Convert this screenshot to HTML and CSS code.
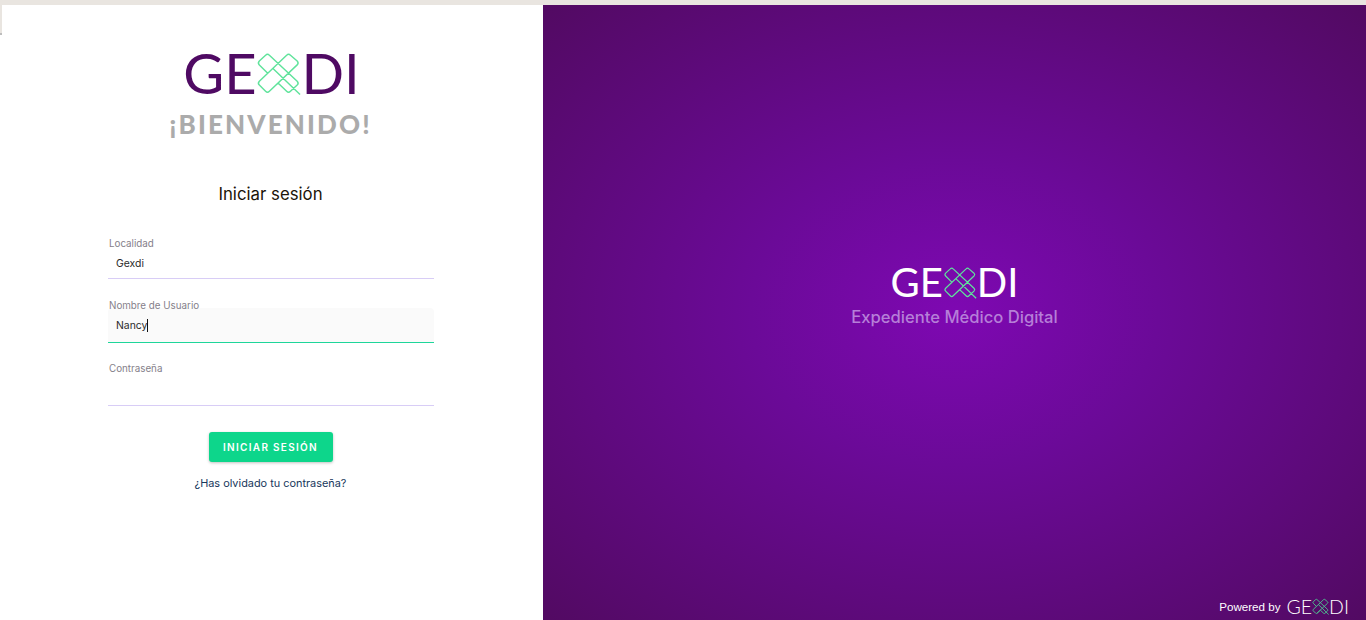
FILE: index.html
```html
<!DOCTYPE html>
<html lang="en">
<head>
  <meta charset="UTF-8" />
  <meta name="viewport" content="width=device-width, initial-scale=1.0"/>
  <title>Gexdi</title>
  <link rel="stylesheet" href="styles.css">
</head>
<body>
  <svg class="sprites" width="0" height="0">
    <symbol id="mark" viewBox="2 4 47 46">
      <path d="M12 8 Q14 6 16 8 L45 35 Q47 37 45 39 L38 45.5 Q36 47.5 34 45.5 L25 37 L16 45.5 Q14 47.5 12 45.5 L5.5 39 Q3.5 37 5.5 35 L34 8 Q36 6 38 8 L45 14 Q47 16 45 18 L16 45.5 M12 8 L5.5 14 Q3.5 16 5.5 18 L14 26.5 M20 22 L48 49" />
    </symbol>
  </svg>

  <div class="top-bar"></div>
  <div class="edge-strip"></div>

  <div class="page">
    <!-- Login -->
    <main class="login-panel">
      <div class="logo logo-large">
        <span>GE</span>
        <svg class="logo-mark"><use href="#mark"></use></svg>
        <span>DI</span>
      </div>
      <div class="welcome">¡BIENVENIDO!</div>
      <h1 class="login-title">Iniciar sesión</h1>

      <form class="login-form">
        <div class="field field-short">
          <div class="field-label">Localidad</div>
          <div class="field-input short">Gexdi</div>
        </div>
        <div class="field">
          <div class="field-label">Nombre de Usuario</div>
          <div class="field-input focused">Nancy<span class="caret"></span></div>
        </div>
        <div class="field">
          <div class="field-label">Contraseña</div>
          <div class="field-input"></div>
        </div>
        <button type="button" class="button">INICIAR SESIÓN</button>
        <a class="forgot" href="#">¿Has olvidado tu contraseña?</a>
      </form>
    </main>

    <!-- Brand side -->
    <section class="brand-panel">
      <div class="brand-center">
        <div class="logo logo-medium">
          <span>GE</span>
          <svg class="logo-mark"><use href="#mark"></use></svg>
          <span>DI</span>
        </div>
        <div class="tagline">Expediente Médico Digital</div>
      </div>
      <div class="powered">
        <span class="powered-text">Powered by</span>
        <div class="logo logo-small">
          <span>GE</span>
          <svg class="logo-mark"><use href="#mark"></use></svg>
          <span>DI</span>
        </div>
      </div>
    </section>
  </div>
</body>
</html>
```

FILE: styles.css
```css
* {
  box-sizing: border-box;
}

body {
  margin: 0;
  height: 620px;
  overflow: hidden;
  background-color: #ffffff;
  font-family: Inter, "Liberation Sans", sans-serif;
  display: flex;
  flex-direction: column;
}

.sprites {
  position: absolute;
}

.top-bar {
  height: 5px;
  background-color: #e9e5e0;
}

.edge-strip {
  position: absolute;
  top: 5px;
  left: 0;
  width: 2px;
  height: 30px;
  background-color: #e9e5e0;
  border-bottom: 2px solid #bdbdbd;
}

.page {
  flex: 1;
  display: flex;
}

.login-panel {
  width: 543px;
  display: flex;
  flex-direction: column;
  align-items: center;
  padding: 40px 2px 0 0;
}

.logo {
  display: flex;
  align-items: center;
  font-family: Lato, sans-serif;
  line-height: 1;
}

.logo-mark {
  fill: none;
  stroke: #5fe39b;
  stroke-width: 1.5;
  stroke-linejoin: round;
}

.logo-large {
  font-size: 56px;
  color: #4f0a63;
  margin-left: 2px;
}

.logo-large .logo-mark {
  width: 45px;
  height: 45px;
}

.logo-medium {
  font-size: 40px;
  color: #ffffff;
  justify-content: center;
}

.logo-medium .logo-mark {
  width: 34px;
  height: 33px;
  stroke-width: 1.7;
}

.logo-small {
  font-size: 19.5px;
  font-weight: 300;
  color: #ffffff;
}

.logo-small .logo-mark {
  width: 17px;
  height: 17px;
  stroke: #4fbf8f;
  stroke-width: 2.6;
}

.welcome {
  font-family: Lato, sans-serif;
  font-weight: 900;
  font-size: 26px;
  line-height: 32px;
  letter-spacing: 2.15px;
  color: #ababab;
  margin-top: 7px;
}

.login-title {
  margin: 42px 0 0;
  font-size: 16.8px;
  line-height: 24px;
  font-weight: 400;
  color: #1c1408;
}

.login-form {
  width: 326px;
  margin-top: 32px;
  display: flex;
  flex-direction: column;
  align-items: center;
}

.field {
  width: 100%;
  height: 63px;
}

.field-short {
  height: 62px;
}

.field-label {
  font-size: 9.8px;
  line-height: 12px;
  margin-bottom: -4px;
  padding-left: 1.5px;
  color: #85808a;
}

.field-input {
  height: 35px;
  padding: 0 8.5px;
  display: flex;
  align-items: center;
  font-size: 10.4px;
  color: #2a2a2a;
  border-bottom: 1px solid #d8cdf6;
}

.field-input.short {
  height: 33px;
  padding-top: 2px;
}

.field-input.focused {
  background-color: #fafafa;
  border-bottom-color: #1ed69a;
  border-radius: 4px 4px 0 0;
}

.caret {
  width: 1px;
  height: 13px;
  background-color: #111111;
}

.button {
  width: 124px;
  height: 30px;
  margin-top: 6px;
  border: none;
  border-radius: 3px;
  background-color: #0dd68b;
  color: #ffffff;
  font-family: Inter, sans-serif;
  font-size: 10px;
  font-weight: 600;
  letter-spacing: 1.3px;
  box-shadow: 0 1px 3px rgba(0, 0, 0, 0.25);
}

.forgot {
  margin-top: 14px;
  font-size: 10.9px;
  line-height: 14px;
  color: #17375c;
  text-decoration: none;
}

.brand-panel {
  flex: 1;
  display: flex;
  flex-direction: column;
  background: radial-gradient(ellipse at center, #7e08b2 0%, #6b0a98 35%, #520a62 100%);
}

.brand-center {
  flex: 1;
  display: flex;
  flex-direction: column;
  align-items: center;
  justify-content: center;
  padding-bottom: 12px;
}

.tagline {
  margin-top: 5px;
  font-size: 16.6px;
  line-height: 20px;
  font-weight: 500;
  color: #b67fd8;
}

.powered {
  display: flex;
  align-items: center;
  justify-content: flex-end;
  gap: 6px;
  padding: 0 17px 4px 0;
}

.powered-text {
  font-family: "Liberation Sans", sans-serif;
  font-size: 11.6px;
  color: #ffffff;
}
```
